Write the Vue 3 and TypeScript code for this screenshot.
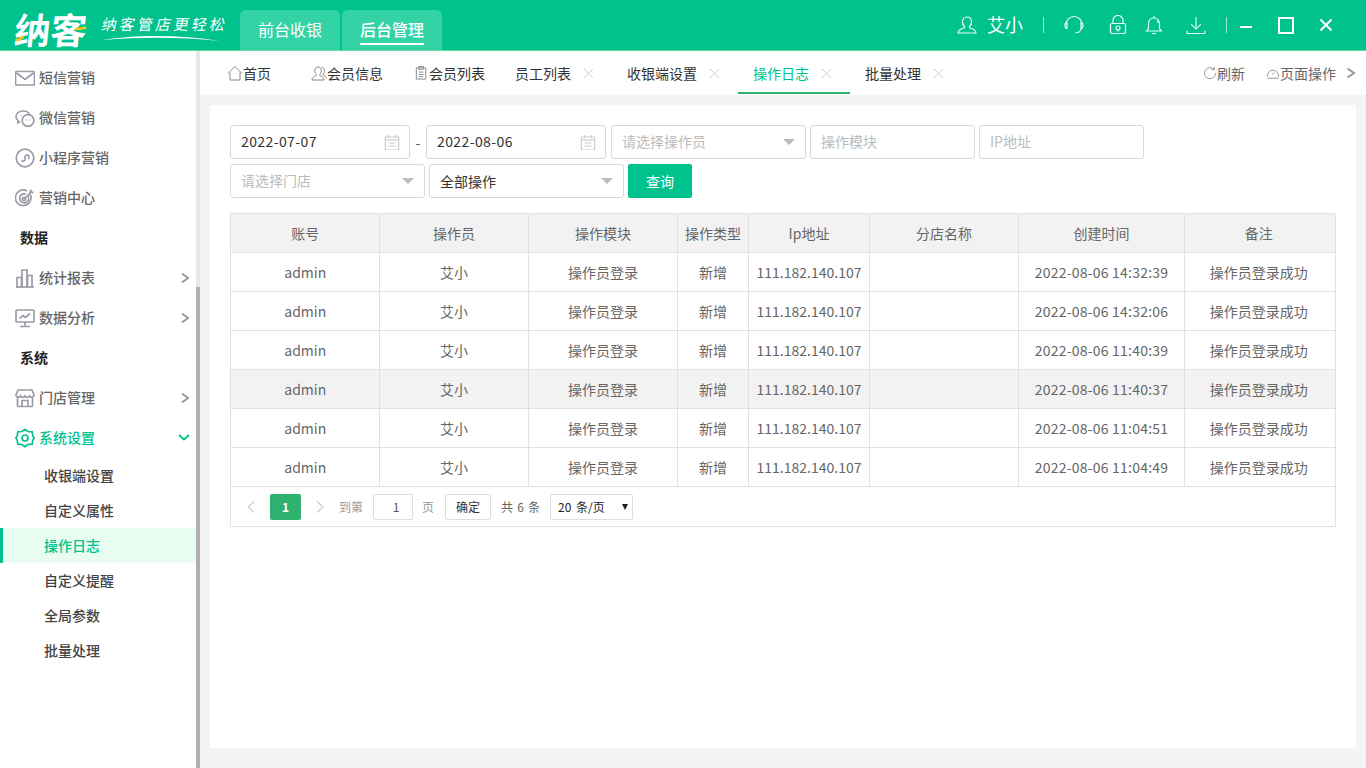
<script setup lang="ts">
const circle = (x: number, y: number, r: number) =>
  `M${x} ${y - r}a${r} ${r} 0 1 0 0 ${r * 2}a${r} ${r} 0 1 0 0-${r * 2}z`;

const icons: Record<string, string[]> = {
  mail: ["M1.5 3.5h17a1 1 0 0 1 1 1v11.5a1 1 0 0 1-1 1h-17a1 1 0 0 1-1-1V4.500a1 1 0 0 1 1-1z", "M1.500 5l8.500 6.500L18.500 5"],
  wechat: ["M8 3C4.200 3 1 5.500 1 8.700c0 1.700.9 3.100 2.300 4.200l-.5 1.900 2.300-1.100", "M14.800 6.800C14 4.600 11.300 3 8 3", circle(13, 12.5, 5.800), "M10.500 12h.8M14.500 12h.8", "M5.500 7.500h.8M10 7.500h.4"],
  mini: [circle(10, 10, 8.800), "M6.500 12.500a2 2 0 0 0 3.500-1.300V8.800a2 2 0 1 1 3 1.900"],
  target: ["M15 6a7.800 7.800 0 1 1-3-3", "M12.800 7.600a4.500 4.500 0 1 1-2-1.500", circle(9, 11, 1.600), "M9 11l8-8M15.500 1.500v3h3"],
  bars: ["M1 19h18", "M2 19V9.500h4.500V19", "M7 19V2h5v17", "M12.500 19V7.500H17V19"],
  monitor: ["M2 2h16a1 1 0 0 1 1 1v10a1 1 0 0 1-1 1H2a1 1 0 0 1-1-1V3a1 1 0 0 1 1-1z", "M10 14v4M5 18.500h10", "M4.500 10.500l3.500-3 2.500 2L15 5.500"],
  store: ["M3 2h14l2 5c0 2.500-3.300 2.800-4.500 1-1 1.800-3.500 1.800-4.500 0-1 1.800-3.500 1.800-4.500 0C4.300 9.800 1 9.500 1 7z", "M2.500 10v7.500a1 1 0 0 0 1 1h13a1 1 0 0 0 1-1V10", "M7 18v-5.500h6V18"],
  gear: ["M10 1.300l3 2.200 4.200.4.600 4 1.400 2.100-1.400 2.100-.6 4-4.200.4-3 2.200-3-2.200-4.200-.4-.6-4L.8 10l1.400-2.100.6-4 4.200-.4z", circle(10, 10, 3)],
  home: ["M1 8.500L8 1.500l7 7", "M3 7.500v7.500h10V7.500"],
  member: ["M7 2c-2 0-3.300 1.500-3.300 3.800 0 1.600.7 2.800 1.500 3.600v1.200C3 11.500 1 12.800 1 15h12c0-2.200-2-3.500-4.200-4.400V9.400c.8-.8 1.500-2 1.500-3.600C10.300 3.500 9 2 7 2z", "M10.500 2.200c2 .3 3 1.800 3 3.600 0 1.400-.6 2.500-1.300 3.300v1c1.500.7 2.800 1.800 3.300 3.400"],
  clip: ["M2.500 2.500h10v12h-10z", "M5 1h5v3H5z", "M5 7h5M5 9.500h5M5 12h5"],
  refresh: ["M12.500 3.800A6.300 6.300 0 1 0 14.300 8", "M13 1v3.200H9.800"],
  gauge: ["M2 12.500a6.200 6.200 0 1 1 12 0", "M7 10l2.500-2.500", "M2 14h12"],
  user: ["M10 2C7.300 2 5.500 4 5.500 7c0 2 .9 3.500 2 4.500v1.300C4.500 13.800 1 15 1 18h18c0-3-3.500-4.200-6.500-5.200v-1.300c1.100-1 2-2.500 2-4.500 0-3-1.800-5-4.500-5z"],
  headset: ["M2.500 9.500a8 8 0 0 1 16 0", "M3.500 7.500c-1.500 0-2 1.200-2 3s.5 3 2 3z", "M17.500 7.500c1.500 0 2 1.200 2 3s-.5 3-2 3z", "M17.500 14c-.5 2.500-2.500 3.800-5.500 3.800"],
  lock: ["M3 8.500h12a1.500 1.500 0 0 1 1.500 1.500v7a1.500 1.500 0 0 1-1.500 1.500H3A1.500 1.500 0 0 1 1.500 17v-7A1.500 1.500 0 0 1 3 8.500z", "M4 8.500V5.500a5 5 0 0 1 10 0v3", circle(9, 13, 2), "M9 15v1.500"],
  bell: ["M9 3c-3.500 0-5.500 2.500-5.500 6v4.500L1.500 16h15l-2-2.500V9c0-3.500-2-6-5.500-6z", "M9 1v2", "M7 18.500h4", "M12 5.500c.8.600 1.300 1.600 1.500 2.500"],
  download: ["M11 1v13", "M5.500 9l5.500 5.500L16.500 9", "M1 16v2.500a1 1 0 0 0 1 1h18a1 1 0 0 0 1-1V16"],
  calendar: ["M2 3h12a.7.7 0 0 1 .7.700v11.600a.7.7 0 0 1-.7.700H2a.7.7 0 0 1-.7-.7V3.700A.7.7 0 0 1 2 3z", "M4.500 1v3M11.500 1v3", "M1.500 6h13", "M4.500 9h7M4.500 12h7"],
};

const sideMenu = [
  { type: "item", label: "短信营销", icon: "mail" },
  { type: "item", label: "微信营销", icon: "wechat" },
  { type: "item", label: "小程序营销", icon: "mini" },
  { type: "item", label: "营销中心", icon: "target" },
  { type: "group", label: "数据" },
  { type: "item", label: "统计报表", icon: "bars", arrow: true },
  { type: "item", label: "数据分析", icon: "monitor", arrow: true },
  { type: "group", label: "系统" },
  { type: "item", label: "门店管理", icon: "store", arrow: true },
];

const subMenu = ["收银端设置", "自定义属性", "操作日志", "自定义提醒", "全局参数", "批量处理"];

const tabs = [
  { label: "首页", icon: "home", cls: "tab--home" },
  { label: "会员信息", icon: "member", cls: "tab--member" },
  { label: "会员列表", icon: "clip", cls: "tab--list" },
  { label: "员工列表", close: true },
  { label: "收银端设置", close: true },
  { label: "操作日志", close: true, active: true },
  { label: "批量处理", close: true },
];

const columns = [
  { title: "账号", width: 148 },
  { title: "操作员", width: 149 },
  { title: "操作模块", width: 149 },
  { title: "操作类型", width: 71 },
  { title: "Ip地址", width: 121 },
  { title: "分店名称", width: 149 },
  { title: "创建时间", width: 166 },
  { title: "备注", width: 151 },
];

const times = [
  "2022-08-06 14:32:39",
  "2022-08-06 14:32:06",
  "2022-08-06 11:40:39",
  "2022-08-06 11:40:37",
  "2022-08-06 11:04:51",
  "2022-08-06 11:04:49",
];
</script>

<template>
  <div class="app">
    <header class="topbar">
      <div class="logo">
        <span class="logo-name">纳客</span>
        <span class="logo-slogan">纳客管店更轻松</span>
        <svg class="logo-deco" width="240" height="50" viewBox="0 0 240 50" fill="none">
          <path d="M103 40c30-5 75-6 117 1c-40-4-80-4-117-1z" fill="#fff" />
          <path d="M15.500 40.500c3-.5 6-2 8-4.500" stroke="#ffc61a" stroke-width="2.500" />
          <path d="M75 29c4 0 8-.5 11-1.500" stroke="#ffc61a" stroke-width="2.500" />
        </svg>
      </div>
      <nav class="mode-tabs">
        <div class="mode-tab">前台收银</div>
        <div class="mode-tab mode-tab--on"><span>后台管理</span></div>
      </nav>
      <div class="top-right">
        <svg class="top-icon" width="20" height="20" viewBox="0 0 20 20"><path v-for="d in icons.user" :key="d" :d="d" /></svg>
        <span class="top-user">艾小</span>
        <i class="top-divider"></i>
        <svg class="top-icon top-headset" width="22" height="20" viewBox="0 0 21 20"><path v-for="d in icons.headset" :key="d" :d="d" /></svg>
        <svg class="top-icon top-lock" width="18" height="20" viewBox="0 0 18 20"><path v-for="d in icons.lock" :key="d" :d="d" /></svg>
        <svg class="top-icon top-bell" width="18" height="20" viewBox="0 0 18 20"><path v-for="d in icons.bell" :key="d" :d="d" /></svg>
        <svg class="top-icon top-download" width="20" height="18" viewBox="0 0 22 20"><path v-for="d in icons.download" :key="d" :d="d" /></svg>
        <i class="top-divider top-divider--win"></i>
        <i class="win-min"></i>
        <i class="win-max"></i>
        <svg class="win-close" width="14" height="14" viewBox="0 0 14 14"><path d="M1.500 1.500l11 11M12.500 1.500l-11 11" /></svg>
      </div>
    </header>

    <div class="body">
      <aside class="sidebar">
        <template v-for="item in sideMenu" :key="item.label">
          <div v-if="item.type === 'group'" class="side-group">{{ item.label }}</div>
          <div v-else class="side-item">
            <svg class="side-icon" width="20" height="20" viewBox="0 0 20 20"><path v-for="d in icons[item.icon!]" :key="d" :d="d" /></svg>
            <span class="side-text">{{ item.label }}</span>
            <svg v-if="item.arrow" class="side-arrow" width="10" height="12" viewBox="0 0 10 12"><path d="M2 1.500L8 6l-6 4.500" /></svg>
          </div>
        </template>
        <div class="side-item side-item--open">
          <svg class="side-icon" width="20" height="20" viewBox="0 0 20 20"><path v-for="d in icons.gear" :key="d" :d="d" /></svg>
          <span class="side-text">系统设置</span>
          <svg class="side-arrow" width="12" height="10" viewBox="0 0 12 10"><path d="M1 2l5 4.500L11 2" /></svg>
        </div>
        <div
          v-for="sub in subMenu"
          :key="sub"
          class="side-sub"
          :class="{ 'side-sub--on': sub === '操作日志' }"
        >
          {{ sub }}
        </div>
      </aside>
      <div class="side-scroll"><div class="side-thumb"></div></div>

      <main class="main">
        <div class="tabbar">
          <div class="tabs">
            <div
              v-for="tab in tabs"
              :key="tab.label"
              class="tab"
              :class="[tab.cls, { 'tab--on': tab.active }]"
            >
              <svg v-if="tab.icon" class="tab-icon" width="16" height="16" viewBox="0 0 16 16"><path v-for="d in icons[tab.icon]" :key="d" :d="d" /></svg>
              <span>{{ tab.label }}</span>
              <svg v-if="tab.close" class="tab-close" width="11" height="11" viewBox="0 0 11 11"><path d="M1 1l9 9M10 1l-9 9" /></svg>
            </div>
          </div>
          <div class="tab-tools">
            <div class="tab-tool">
              <svg class="tab-icon" width="14" height="16" viewBox="0 0 16 16"><path v-for="d in icons.refresh" :key="d" :d="d" /></svg>
              <span>刷新</span>
            </div>
            <div class="tab-tool">
              <svg class="tab-icon" width="14" height="16" viewBox="0 0 16 16"><path v-for="d in icons.gauge" :key="d" :d="d" /></svg>
              <span>页面操作</span>
            </div>
            <svg class="tab-more" width="10" height="12" viewBox="0 0 10 12"><path d="M1.500 1.500L8 6l-6.500 4.500" /></svg>
          </div>
        </div>

        <div class="content">
          <section class="card">
            <div class="filters">
              <div class="field field--date">
                <span class="val val--date">2022-07-07</span>
                <svg class="cal" width="16" height="16" viewBox="0 0 16 16"><path v-for="d in icons.calendar" :key="d" :d="d" /></svg>
              </div>
              <span class="dash">-</span>
              <div class="field field--date">
                <span class="val val--date">2022-08-06</span>
                <svg class="cal" width="16" height="16" viewBox="0 0 16 16"><path v-for="d in icons.calendar" :key="d" :d="d" /></svg>
              </div>
              <div class="field field--select field--after-date">
                <span class="ph">请选择操作员</span><i class="caret"></i>
              </div>
              <div class="field field--input"><span class="ph">操作模块</span></div>
              <div class="field field--input"><span class="ph">IP地址</span></div>
            </div>
            <div class="filters">
              <div class="field field--select">
                <span class="ph">请选择门店</span><i class="caret"></i>
              </div>
              <div class="field field--select">
                <span class="val">全部操作</span><i class="caret"></i>
              </div>
              <button class="query">查询</button>
            </div>

            <div class="grid">
              <table>
                <colgroup>
                  <col v-for="c in columns" :key="c.title" :style="{ width: c.width + 'px' }" />
                </colgroup>
                <thead>
                  <tr>
                    <th v-for="c in columns" :key="c.title">{{ c.title }}</th>
                  </tr>
                </thead>
                <tbody>
                  <tr v-for="(t, i) in times" :key="t" :class="{ hover: i === 3 }">
                    <td>admin</td>
                    <td>艾小</td>
                    <td>操作员登录</td>
                    <td>新增</td>
                    <td>111.182.140.107</td>
                    <td></td>
                    <td class="time">{{ t }}</td>
                    <td>操作员登录成功</td>
                  </tr>
                </tbody>
              </table>
              <div class="pager">
                <svg class="pg-arrow pg-prev" width="10" height="14" viewBox="0 0 10 14"><path d="M8 1.500L2 7l6 5.500" /></svg>
                <span class="pg-cur">1</span>
                <svg class="pg-arrow pg-next" width="10" height="14" viewBox="0 0 10 14"><path d="M2 1.500L8 7l-6 5.500" /></svg>
                <span class="pg-text pg-to">到第</span>
                <span class="pg-input">1</span>
                <span class="pg-text pg-page">页</span>
                <span class="pg-ok">确定</span>
                <span class="pg-total">共 6 条</span>
                <span class="pg-size">20 条/页<i></i></span>
              </div>
            </div>
          </section>
        </div>
      </main>
    </div>
  </div>
</template>

<style scoped>
.app {
  width: 1366px;
  height: 768px;
  display: flex;
  flex-direction: column;
  overflow: hidden;
  font-family: "Noto Sans CJK SC", "Noto Sans", sans-serif;
  font-size: 14px;
  color: #333;
  background: #fff;
}

/* top bar */
.topbar {
  height: 51px;
  flex: none;
  box-sizing: border-box;
  display: flex;
  background: #00c28d;
  border-bottom: 1px solid #5fdc9a;
  color: #fff;
}
.logo {
  position: relative;
  width: 240px;
  flex: none;
  display: flex;
  align-items: flex-start;
  padding-left: 15px;
  box-sizing: border-box;
}
.logo-name {
  font-size: 36px;
  font-weight: 700;
  line-height: 36px;
  margin-top: 10px;
  transform: skewX(-6deg);
}
.logo-slogan {
  margin: 14px 0 0 15px;
  font-size: 15px;
  line-height: 20px;
  letter-spacing: 3px;
  white-space: nowrap;
  transform: skewX(-12deg);
}
.logo-deco {
  position: absolute;
  left: 0;
  top: 0;
}
.mode-tabs {
  display: flex;
  gap: 2px;
  padding-top: 10px;
}
.mode-tab {
  width: 100px;
  height: 40px;
  box-sizing: border-box;
  padding-top: 7px;
  text-align: center;
  font-size: 16px;
  line-height: 24px;
  background: #34d3a6;
  border-radius: 6px 6px 0 0;
}
.mode-tab--on span {
  display: inline-block;
  font-weight: 500;
  height: 26px;
  border-bottom: 2px solid #fff;
}
.top-right {
  margin-left: auto;
  display: flex;
  align-items: center;
  padding-right: 33px;
  height: 50px;
}
.top-icon {
  fill: none;
  stroke: #e6fff6;
  stroke-width: 1.200;
}
.top-user {
  margin: -2px 0 0 10px;
  font-size: 18px;
}
.top-divider {
  width: 1px;
  height: 16px;
  margin-left: 20px;
  background: #9fe6cf;
}
.top-headset { margin-left: 19px; }
.top-lock { margin-left: 24px; }
.top-bell { margin-left: 18px; }
.top-download { margin-left: 23px; }
.top-divider--win { margin-left: 20px; }
.win-min {
  width: 12px;
  height: 2px;
  margin: 3px 0 0 13px;
  background: #fff;
}
.win-max {
  width: 12px;
  height: 13px;
  margin-left: 26px;
  border: 2px solid #fff;
}
.win-close {
  margin-left: 25px;
  fill: none;
  stroke: #fff;
  stroke-width: 2;
}

/* side menu */
.body {
  flex: 1;
  display: flex;
  min-height: 0;
}
.sidebar {
  width: 196px;
  flex: none;
  padding-top: 7px;
  box-sizing: border-box;
}
.side-item {
  height: 40px;
  display: flex;
  align-items: center;
  gap: 4px;
  padding: 0 6px 0 15px;
  color: #666;
  font-weight: 500;
}
.side-text {
  margin-top: -2px;
}
.side-icon {
  flex: none;
  fill: none;
  stroke: #9b9ba6;
  stroke-width: 1.700;
}
.side-arrow {
  margin-left: auto;
  fill: none;
  stroke: #999;
  stroke-width: 2;
}
.side-group {
  height: 40px;
  line-height: 38px;
  padding-left: 20px;
  font-weight: 700;
  color: #222;
}
.side-item--open {
  color: #00c28d;
}
.side-item--open .side-icon,
.side-item--open .side-arrow {
  stroke: #00c28d;
}
.side-sub {
  height: 35px;
  line-height: 35px;
  padding-left: 44px;
  font-weight: 500;
  color: #444;
}
.side-sub--on {
  padding-left: 41px;
  color: #00c28d;
  background: #e6fdf0;
  border-left: 3px solid #00c28d;
}
.side-scroll {
  width: 4px;
  flex: none;
  display: flex;
  padding-top: 236px;
  box-sizing: border-box;
  background: #e8e8e8;
}
.side-thumb {
  flex: 1;
  background: #b0b0b0;
}

/* tabs */
.main {
  flex: 1;
  min-width: 0;
  display: flex;
  flex-direction: column;
  background: #f4f4f4;
}
.tabbar {
  height: 44px;
  flex: none;
  display: flex;
  justify-content: space-between;
  padding-left: 12px;
  background: #fff;
}
.tabs {
  display: flex;
}
.tab {
  display: flex;
  align-items: center;
  box-sizing: border-box;
  height: 43px;
  padding: 0 15px;
  color: #333;
  font-size: 14px;
  white-space: nowrap;
}
.tab--home { padding-right: 25px; }
.tab--member { padding-right: 16px; }
.tab--list .tab-icon { width: 15px; }
.tab--on {
  color: #00c28d;
  box-shadow: inset 0 -2px 0 #2fb170;
}
.tab-icon {
  flex: none;
  fill: none;
  stroke: #888;
  stroke-width: 1;
}
.tab-close {
  margin: 2px 3px 0 12px;
  fill: none;
  stroke: #ccc;
  stroke-width: 1;
}
.tab-tools {
  display: flex;
  align-items: center;
  height: 43px;
  padding: 0 10px 0 0;
  color: #666;
}
.tab-tool {
  display: flex;
  align-items: center;
  margin-right: 21px;
}
.tab-tool + .tab-tool {
  margin-right: 10px;
}
.tab-more {
  fill: none;
  stroke: #999;
  stroke-width: 2;
}

/* card and filter form */
.content {
  flex: 1;
  min-height: 0;
  padding: 10px 10px 20px;
}
.card {
  height: 100%;
  box-sizing: border-box;
  padding: 20px;
  background: #fff;
}
.filters {
  display: flex;
  align-items: center;
  gap: 4px;
  margin-bottom: 5px;
}
.field {
  height: 34px;
  box-sizing: border-box;
  display: flex;
  align-items: center;
  justify-content: space-between;
  padding: 0 10px;
  border: 1px solid #d9d9d9;
  border-radius: 3px;
  background: #fff;
}
.field--date {
  width: 180px;
  padding-right: 9px;
}
.field--select { width: 195px; }
.field--after-date { margin-left: 1px; }
.field--input { width: 165px; }
.val { color: #333; }
.val--date {
  margin-top: -2px;
  letter-spacing: 0.4px;
}
.ph {
  margin-top: -2px;
  color: #bbb;
}
.dash {
  width: 8px;
  text-align: center;
  color: #555;
}
.cal {
  fill: none;
  stroke: #ccc;
  stroke-width: 1.200;
}
.caret {
  width: 0;
  height: 0;
  border-left: 6px solid transparent;
  border-right: 6px solid transparent;
  border-top: 6px solid #bbb;
}
.query {
  width: 64px;
  height: 34px;
  padding: 0;
  border: 0;
  border-radius: 2px;
  color: #fff;
  background: #00c28d;
  font: inherit;
  font-size: 14px;
}

/* table */
.grid {
  margin-top: 15px;
  border: 1px solid #e2e2e2;
  width: 1106px;
  box-sizing: border-box;
}
table {
  width: 1104px;
  table-layout: fixed;
  border-collapse: collapse;
}
th,
td {
  height: 38px;
  padding: 0 0 0 1px;
  text-align: center;
  font-weight: 400;
  color: #666;
  font-size: 14px;
  border: 1px solid #e2e2e2;
  white-space: nowrap;
}
th {
  background: #f2f2f2;
}
td.time {
  letter-spacing: 0.21px;
}
tr > :first-child { border-left: 0; }
tr > :last-child {
  padding: 0 2px 0 0;
  border-right: 0;
}
thead tr > * { border-top: 0; }
tr.hover td { background: #f2f2f2; }
.pager {
  height: 39px;
  display: flex;
  align-items: center;
  font-size: 12px;
  color: #666;
}
.pg-arrow {
  fill: none;
  stroke: #ccc;
  stroke-width: 1.200;
}
.pg-prev { margin-left: 15px; }
.pg-next { margin-left: 14px; }
.pg-cur {
  width: 31px;
  height: 26px;
  margin-left: 14px;
  line-height: 26px;
  text-align: center;
  font-weight: 700;
  color: #fff;
  background: #2fb170;
  border-radius: 2px;
}
.pg-text { color: #999; }
.pg-to { margin-left: 14px; }
.pg-input,
.pg-ok,
.pg-size {
  height: 26px;
  box-sizing: border-box;
  border: 1px solid #ddd;
  border-radius: 2px;
  line-height: 24px;
  text-align: center;
}
.pg-input {
  width: 40px;
  margin-left: 10px;
  text-indent: 6px;
  color: #555;
}
.pg-page { margin-left: 9px; }
.pg-ok {
  width: 46px;
  margin-left: 11px;
  color: #333;
}
.pg-total {
  margin-left: 10px;
  word-spacing: 1.500px;
}
.pg-size {
  position: relative;
  width: 83px;
  margin-left: 10px;
  padding-left: 7px;
  text-align: left;
  word-spacing: 2px;
  color: #222;
}
.pg-size i {
  position: absolute;
  right: 4px;
  top: 9px;
  border-left: 3.500px solid transparent;
  border-right: 3.500px solid transparent;
  border-top: 6px solid #222;
}
</style>

<style>
html,
body {
  margin: 0;
  overflow: hidden;
}
</style>
